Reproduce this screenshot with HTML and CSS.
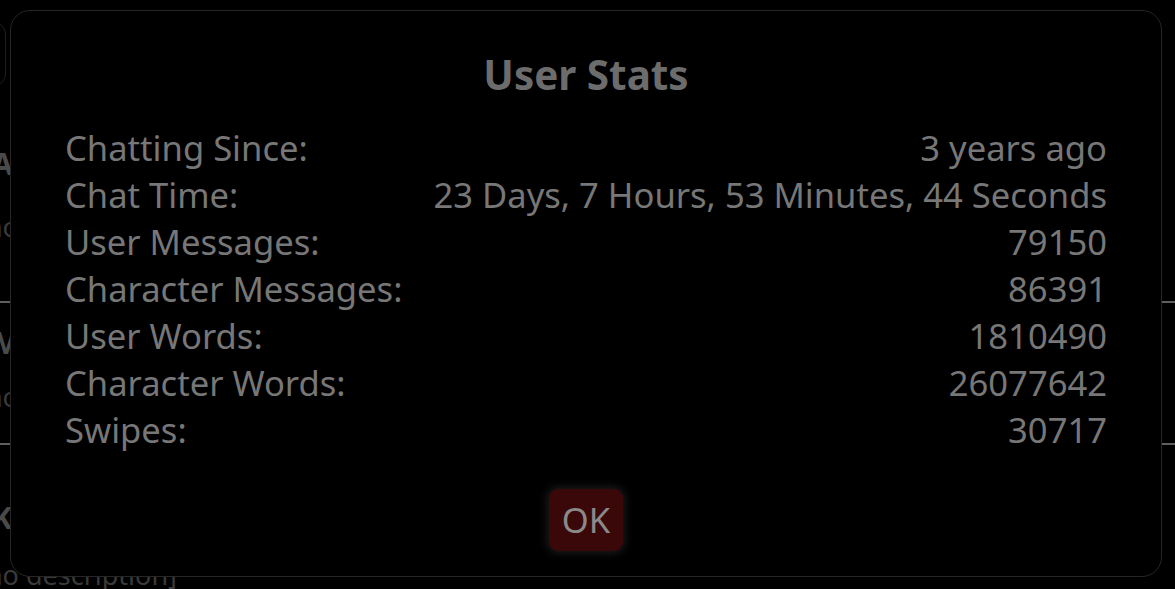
FILE: index.html
```html
<!DOCTYPE html>
<html lang="en">
<head>
  <meta charset="UTF-8">
  <title>User Stats</title>
  <link rel="stylesheet" href="styles.css">
</head>
<body>
  <div class="page">
    <div class="search-box"></div>
    <div class="char-item first">
      <div class="char-name">Au</div>
      <div class="char-desc">[no description]</div>
    </div>
    <div class="char-item">
      <div class="char-name">Me</div>
      <div class="char-desc">[no description]</div>
    </div>
    <div class="char-item last">
      <div class="char-name">Ka</div>
      <div class="char-desc">[no description]</div>
    </div>
  </div>

  <div class="popup">
    <h3 class="popup-title">User Stats</h3>
    <div class="stats">
      <div class="stat-row"><span>Chatting Since:</span><span>3 years ago</span></div>
      <div class="stat-row"><span>Chat Time:</span><span>23 Days, 7 Hours, 53 Minutes, 44 Seconds</span></div>
      <div class="stat-row"><span>User Messages:</span><span>79150</span></div>
      <div class="stat-row"><span>Character Messages:</span><span>86391</span></div>
      <div class="stat-row"><span>User Words:</span><span>1810490</span></div>
      <div class="stat-row"><span>Character Words:</span><span>26077642</span></div>
      <div class="stat-row"><span>Swipes:</span><span>30717</span></div>
    </div>
    <div class="popup-controls">
      <button class="ok-btn">OK</button>
    </div>
  </div>
</body>
</html>
```
FILE: styles.css
```css
body {
  margin: 0;
  background: #000;
  font-family: 'Noto Sans', sans-serif;
  overflow: hidden;
  height: 589px;
  position: relative;
}
.page {
  margin-left: -23px;
  width: 1230px;
}
.search-box {
  margin: 22px 0 0 -40px;
  width: 67px;
  height: 62px;
  border: 1px solid #1e1e1e;
  border-radius: 12px;
}
.char-item {
  border-bottom: 2px solid #5e5e5e;
  padding: 20px 0 28px;
}
.char-item.first {
  padding: 58px 0 56px;
}
.char-item.first .char-desc {
  margin-top: 25px;
}
.char-item.last {
  border-bottom: none;
  padding-top: 53px;
}
.char-item.last .char-desc {
  margin-top: 19px;
}
.char-name {
  font-weight: bold;
  font-size: 30px;
  line-height: 40px;
  color: #4a4a4a;
  margin-left: 15px;
}
.char-desc {
  font-size: 27px;
  line-height: 36px;
  color: #3a3a3a;
  margin-top: 16px;
}
.popup {
  position: absolute;
  left: 10px;
  top: 10px;
  width: 1150px;
  height: 565px;
  background: #000;
  border: 1px solid #262626;
  border-radius: 20px;
}
.popup-title {
  margin: 39px 0 0;
  text-align: center;
  font-size: 40.4px;
  line-height: 50px;
  font-weight: bold;
  color: #6c6c6c;
}
.stats {
  margin: 24px 54px 0;
}
.stat-row {
  display: flex;
  justify-content: space-between;
  font-size: 34.6px;
  line-height: 47px;
  color: #777;
}
.popup-controls {
  display: flex;
  justify-content: center;
  margin-top: 36px;
}
.ok-btn {
  font-family: 'Noto Sans', sans-serif;
  font-size: 34.6px;
  line-height: 47px;
  color: #8a8a8a;
  background: #3a0808;
  border: none;
  border-radius: 9px;
  padding: 7px 13px 8px;
  box-shadow: 0 0 10px 2px #1c1c1c;
}
```
